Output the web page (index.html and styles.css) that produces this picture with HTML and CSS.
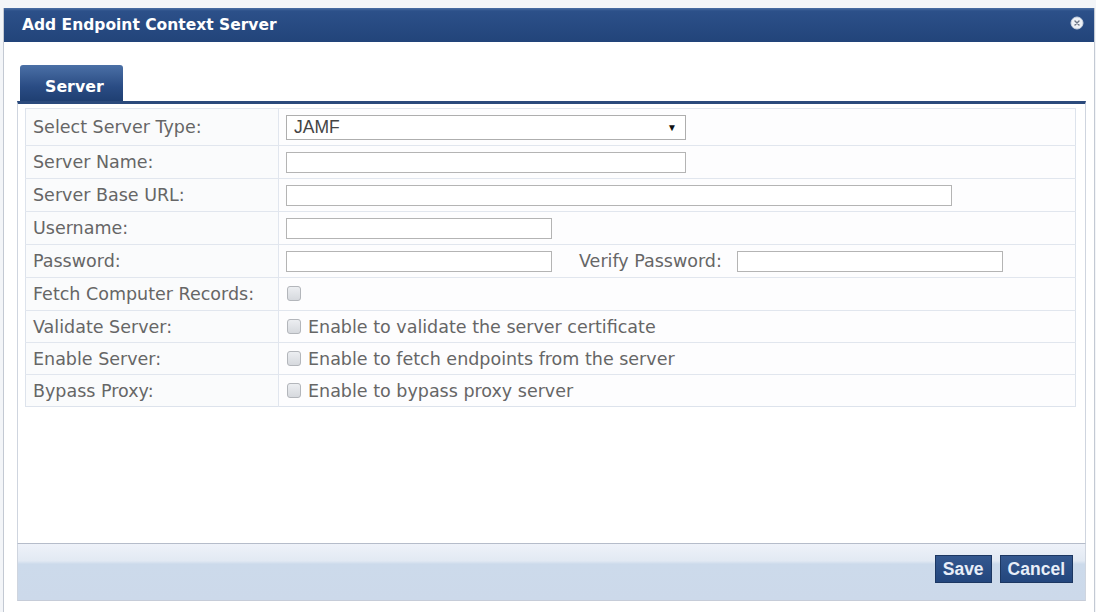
FILE: index.html
```html
<!DOCTYPE html>
<html>
<head>
  <link rel="stylesheet" href="styles.css">
</head>
<body>
  <div class="dialog">
    <div class="dialog-title">
      <span>Add Endpoint Context Server</span>
      <svg class="close-icon" width="14" height="14" viewBox="0 0 14 14">
        <circle cx="7" cy="7" r="6" fill="#eef1f6" stroke="#c9d2e0" stroke-width="1"/>
        <path d="M5 5 L9 9 M9 5 L5 9" stroke="#6b7485" stroke-width="1.4" stroke-linecap="round"/>
      </svg>
    </div>
    <div class="dialog-body">
      <div class="tabs">
        <div class="tab active">Server</div>
      </div>
      <div class="panel">
        <table class="form-table">
          <tr class="row-select">
            <td class="label">Select Server Type:</td>
            <td class="value">
              <div class="select"><span>JAMF</span><span class="arrow">&#9660;</span></div>
            </td>
          </tr>
          <tr>
            <td class="label">Server Name:</td>
            <td class="value"><div class="input w-md"></div></td>
          </tr>
          <tr>
            <td class="label">Server Base URL:</td>
            <td class="value"><div class="input w-lg"></div></td>
          </tr>
          <tr>
            <td class="label">Username:</td>
            <td class="value"><div class="input w-sm"></div></td>
          </tr>
          <tr>
            <td class="label">Password:</td>
            <td class="value">
              <div class="inline">
                <div class="input w-sm"></div>
                <span class="sub-label">Verify Password:</span>
                <div class="input w-sm"></div>
              </div>
            </td>
          </tr>
          <tr>
            <td class="label">Fetch Computer Records:</td>
            <td class="value"><span class="check"></span></td>
          </tr>
          <tr class="row-short">
            <td class="label">Validate Server:</td>
            <td class="value"><span class="check"></span>Enable to validate the server certificate</td>
          </tr>
          <tr class="row-short">
            <td class="label">Enable Server:</td>
            <td class="value"><span class="check"></span>Enable to fetch endpoints from the server</td>
          </tr>
          <tr class="row-short">
            <td class="label">Bypass Proxy:</td>
            <td class="value"><span class="check"></span>Enable to bypass proxy server</td>
          </tr>
        </table>
      </div>
      <div class="footer">
        <button class="btn">Save</button>
        <button class="btn">Cancel</button>
      </div>
    </div>
  </div>
</body>
</html>
```

FILE: styles.css
```css
body { margin: 0; background: #f3f5f8; font-family: "DejaVu Sans", Verdana, sans-serif; }
.dialog { margin: 8px 1px 0 3px; background: #fff; border-left: 1px solid #c3c9d3; border-right: 1px solid #c3c9d3; height: 604px; box-sizing: border-box; }
.dialog-title { height: 34px; background: linear-gradient(#4a6ea4 0, #2c5089 3px, #22447a 100%); color: #fff; font-weight: bold; font-size: 15.5px; display: flex; align-items: center; justify-content: space-between; padding: 0 10px 0 18px; }
.dialog-title span { margin-top: -1px; }
.close-icon { display: block; margin-top: -4px; }
.dialog-body { padding: 23px 8px 0 13px; }
.tabs { display: flex; padding-left: 3px; }
.tab { width: 103px; height: 36px; box-sizing: border-box; padding: 12px 0 0 25px; color: #fff; font-weight: bold; font-size: 15.8px; background: linear-gradient(#4b70a6, #2a4c84 60%, #1f3f72); border-radius: 3px 3px 0 0; }
.panel { border-top: 3px solid #2b4a7c; border-left: 1px solid #cfd5df; border-right: 1px solid #cfd5df; height: 442px; box-sizing: border-box; padding: 4px 9px 0 7px; }
.form-table { width: 100%; border-collapse: collapse; border: 1px solid #dde3ec; background: #fdfdfe; color: #666; font-size: 17.5px; }
.form-table td { border-top: 1px solid #e1e6ee; height: 33px; padding: 0 8px 0 7px; box-sizing: border-box; }
.form-table tr.row-select td { height: 37px; }
.form-table tr.row-short td { height: 32px; }
.form-table td.label { width: 253px; border-right: 1px solid #e1e6ee; background: #fafbfc; }
.form-table td.value { padding-left: 7px; }
.input { height: 21px; border: 1px solid #b4b4b4; background: #fff; box-sizing: border-box; }
.w-sm { width: 266px; }
.w-md { width: 400px; }
.w-lg { width: 666px; }
.inline { display: flex; align-items: center; }
.sub-label { margin: 0 15px 0 27px; }
.select { width: 400px; height: 25px; border: 1px solid #aeaeae; box-sizing: border-box; display: flex; align-items: center; justify-content: space-between; padding: 0 8px 0 7px; font-family: "Liberation Sans", Arial, sans-serif; font-size: 17.5px; color: #444; background: #fff; }
.arrow { font-size: 10px; color: #111; }
.check { display: inline-block; width: 12px; height: 13px; border: 1px solid #b3b6bb; border-radius: 3px; background: linear-gradient(#eceef1, #d6d9de); vertical-align: -1px; margin: 0 7px 0 1px; }
.footer { height: 58px; border-top: 1px solid #b5bcca; border-bottom: 1px solid #c6ccd8; border-left: 1px solid #cfd5df; border-right: 1px solid #cfd5df; background: linear-gradient(#eef2f9, #e2e9f3 30%, #ccdaeb 36%, #ccd9ea); box-sizing: border-box; display: flex; justify-content: flex-end; align-items: flex-start; padding: 11px 12px 0 0; gap: 8px; }
.btn { height: 28px; padding: 0 7px; border: 1px solid #1c3762; background: linear-gradient(#34588f, #23467d); color: #e8eef8; font-family: "Liberation Sans", Arial, sans-serif; font-weight: bold; font-size: 17.5px; }
```
